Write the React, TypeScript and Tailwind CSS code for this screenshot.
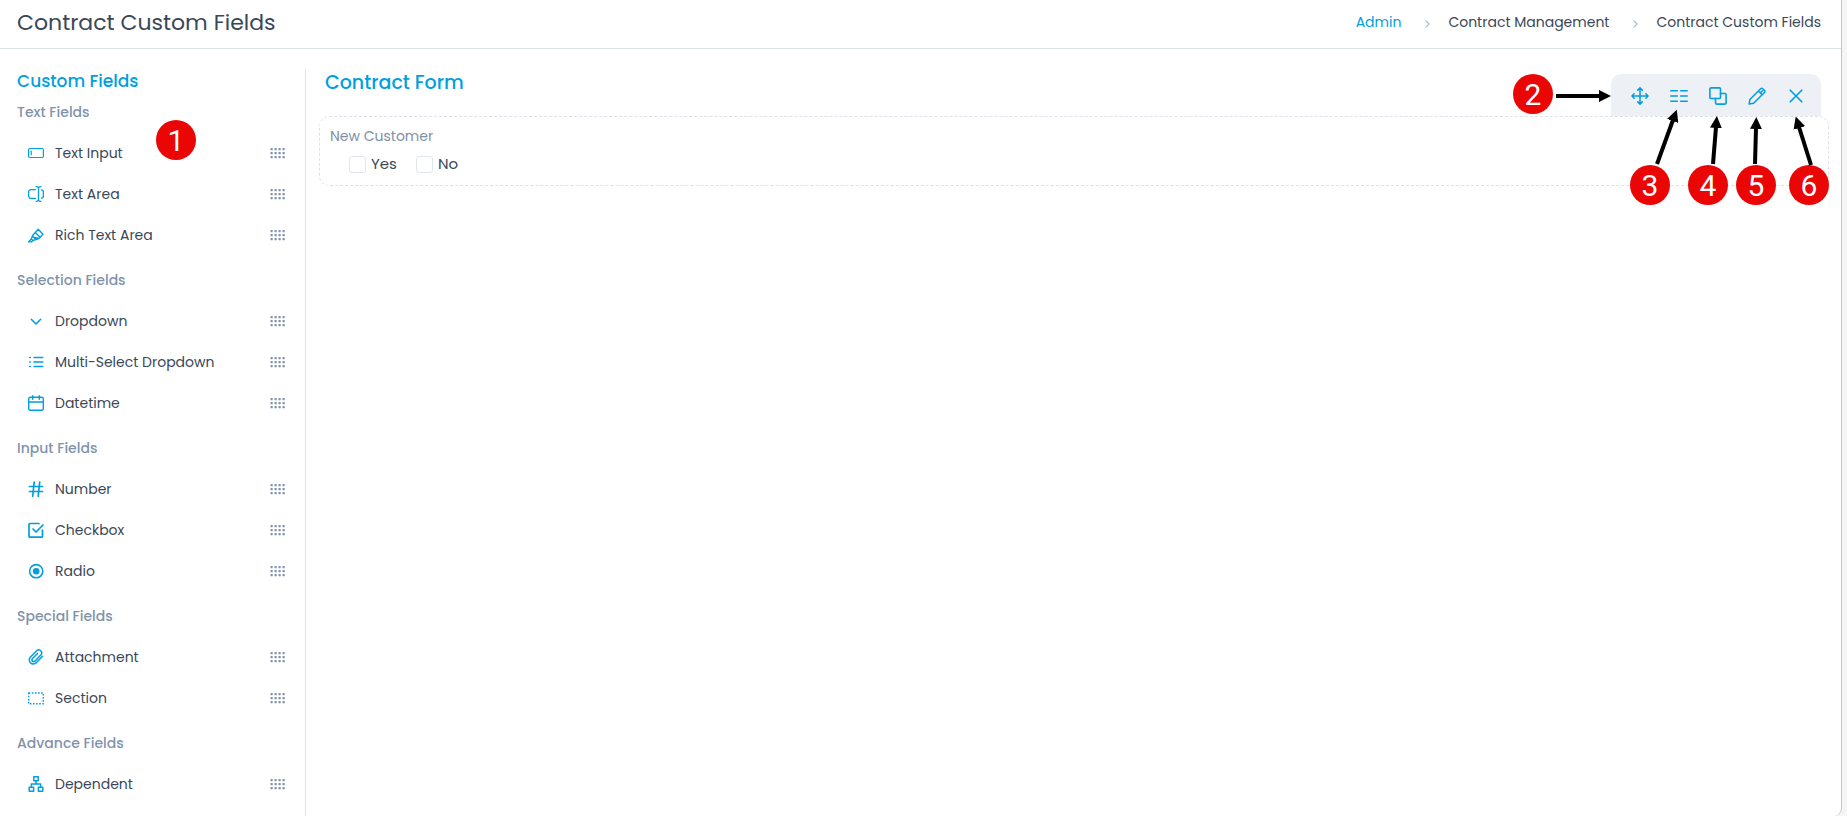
import { useState } from "react";
import type { ReactNode } from "react";

const Icon = ({
  children,
  className = "w-4 h-4",
  strokeWidth = 1.35,
}: {
  children: ReactNode;
  className?: string;
  strokeWidth?: number;
}) => (
  <svg
    className={`${className} shrink-0`}
    viewBox="0 0 16 16"
    fill="none"
    stroke="currentColor"
    strokeWidth={strokeWidth}
    strokeLinecap="round"
    strokeLinejoin="round"
    aria-hidden="true"
  >
    {children}
  </svg>
);

const icons: Record<string, ReactNode> = {
  input: (
    <Icon strokeWidth={1.2}>
      <rect x="0.6" y="3.5" width="14.8" height="9" rx="1.2" />
      <path d="M3.2 6.200v3.600" />
    </Icon>
  ),
  textarea: (
    <Icon strokeWidth={1.3}>
      <path d="M7.5 3.6H3A2.4 2.4 0 0 0 .6 6v4A2.4 2.4 0 0 0 3 12.4h4.500M13.500 3.800a2.300 2.300 0 0 1 1.900 2.300v3.800a2.300 2.300 0 0 1-1.900 2.300" />
      <path d="M8.200.6c1.400 0 2.300.5 2.300 1.400v12c0 .9-.9 1.400-2.300 1.400M12.800.6c-1.400 0-2.300.5-2.300 1.400v12c0 .9.9 1.400 2.300 1.400" />
    </Icon>
  ),
  richtext: (
    <Icon strokeWidth={1.35}>
      <path d="M10.200 2.300l4.800 5-4.200 4.200-5.500-1.300-.7-1.700zM7.300 5.400l5 5M4.600 8.500L3.300 12l1.500 1.500 6-2M5.300 10.200l2.700 2M3.300 12L.7 14.800h3l1.100-1.300" />
    </Icon>
  ),
  dropdown: (
    <Icon strokeWidth={1.6}>
      <path d="M3.300 6.300L8 11l4.700-4.700" />
    </Icon>
  ),
  multiselect: (
    <Icon strokeWidth={1.6}>
      <path d="M6 3.500h8.700M6 8h8.700M6 12.500h8.700M1.700 3.500h.6M1.700 8h.6M1.700 12.500h.6" />
    </Icon>
  ),
  datetime: (
    <Icon strokeWidth={1.4}>
      <rect x="0.700" y="2.300" width="14.600" height="13" rx="1.500" />
      <path d="M.7 7h14.600M4.700.7v3.500M11.300.7v3.500" />
    </Icon>
  ),
  number: (
    <Icon strokeWidth={1.7}>
      <path d="M1.500 5.500h13M1.500 10.500h13M6.200 1L4.700 15.200M11.700 1l-1.500 14.200" />
    </Icon>
  ),
  checkbox: (
    <Icon strokeWidth={1.7}>
      <path d="M11 1.500H2a1 1 0 0 0-1 1v11.700a1 1 0 0 0 1 1h11.500a1 1 0 0 0 1-1V8M5 7l3 3 7-7" />
    </Icon>
  ),
  radio: (
    <Icon strokeWidth={1.6}>
      <circle cx="8.200" cy="8.200" r="6.600" />
      <circle cx="8.200" cy="8.200" r="3.300" fill="currentColor" stroke="none" />
    </Icon>
  ),
  attachment: (
    <Icon strokeWidth={1.5}>
      <path d="M14.500 7.200l-6.300 6.500a4 4 0 0 1-5.900-5.500l6.100-6.300a2.950 2.950 0 0 1 4.400 4.100l-6 6.200a1.750 1.750 0 0 1-2.500-2.400l5.200-5.400" />
    </Icon>
  ),
  section: (
    <Icon strokeWidth={1.5}>
      <rect
        x="0.700"
        y="3"
        width="14.600"
        height="10.800"
        strokeDasharray="1.600 1.500"
        strokeLinecap="butt"
      />
    </Icon>
  ),
  dependent: (
    <Icon strokeWidth={1.5}>
      <path d="M5.800.8h4.400v4H5.800zM1.200 11.200h4.400v4H1.200zM10.400 11.200h4.400v4h-4.400zM8 4.800V8M3.400 11V8h9.200v3" />
    </Icon>
  ),
};

const fieldGroups = [
  {
    title: "Text Fields",
    fields: [
      { label: "Text Input", icon: "input" },
      { label: "Text Area", icon: "textarea" },
      { label: "Rich Text Area", icon: "richtext" },
    ],
  },
  {
    title: "Selection Fields",
    fields: [
      { label: "Dropdown", icon: "dropdown" },
      { label: "Multi-Select Dropdown", icon: "multiselect" },
      { label: "Datetime", icon: "datetime" },
    ],
  },
  {
    title: "Input Fields",
    fields: [
      { label: "Number", icon: "number" },
      { label: "Checkbox", icon: "checkbox" },
      { label: "Radio", icon: "radio" },
    ],
  },
  {
    title: "Special Fields",
    fields: [
      { label: "Attachment", icon: "attachment" },
      { label: "Section", icon: "section" },
    ],
  },
  {
    title: "Advance Fields",
    fields: [{ label: "Dependent", icon: "dependent" }],
  },
];

const toolbarActions = [
  {
    label: "Move",
    icon: (
      <Icon className="w-[18px] h-[18px]">
        <path d="M8 .8v14.400M.8 8h14.400M6 2.800l2-2 2 2M6 13.200l2 2 2-2M2.800 6l-2 2 2 2M13.200 6l2 2-2 2" />
      </Icon>
    ),
  },
  {
    label: "Columns",
    icon: (
      <Icon className="w-[18px] h-[18px]" strokeWidth={1.4}>
        <path d="M.7 3.300h5.800M.7 8h5.800M.7 12.700h5.800M9.500 3.300h5.800M9.500 8h5.800M9.500 12.700h5.800" />
      </Icon>
    ),
  },
  {
    label: "Duplicate",
    icon: (
      <Icon className="w-[18px] h-[18px]" strokeWidth={1.4}>
        <rect x="0.800" y="0.800" width="9.400" height="9.400" rx="0.900" />
        <path d="M10.200 5.800h4.100a.9.9 0 0 1 .9.9v7.600a.9.9 0 0 1-.9.9H6.700a.9.9 0 0 1-.9-.9v-4.100" />
      </Icon>
    ),
  },
  {
    label: "Edit",
    icon: (
      <Icon className="w-[18px] h-[18px]">
        <path d="M11.200 1.500a1.300 1.300 0 0 1 1.900 0l1.500 1.500a1.300 1.300 0 0 1 0 1.900L5 14.500l-4 .7.700-4.100zM9.200 3.600l3.300 3.300M11 5.200l1.800-1.800" />
      </Icon>
    ),
  },
  {
    label: "Remove",
    icon: (
      <Icon className="w-[18px] h-[18px]" strokeWidth={1.5}>
        <path d="M2.900 2.900l10.200 10.200M13.100 2.900L2.900 13.100" />
      </Icon>
    ),
  },
];

const DragHandle = () => (
  <svg
    className="w-4 h-3 ml-auto text-[#7f93ab]"
    viewBox="0 0 16 12"
    fill="currentColor"
    aria-hidden="true"
  >
    {[0, 1, 2].map((row) =>
      [0, 1, 2, 3].map((col) => (
        <rect
          key={`${row}-${col}`}
          x={col * 4 + 0.5}
          y={row * 4 + 1}
          width="2.200"
          height="2.200"
          rx="0.500"
        />
      ))
    )}
  </svg>
);

const steps = [
  { n: 2, cx: 24, cy: 24, from: [47, 26], to: [91, 26] },
  { n: 3, cx: 141, cy: 115, from: [148, 94], to: [164, 50] },
  { n: 4, cx: 199, cy: 115, from: [204, 94], to: [207, 57] },
  { n: 5, cx: 247, cy: 115, from: [246, 94], to: [247, 58] },
  { n: 6, cx: 300, cy: 115, from: [302, 95], to: [290, 57] },
];

// Numbered pointers over the field toolbar
const ToolbarSteps = () => (
  <svg
    className="absolute -top-[47px] -right-px w-[320px] h-[136px] pointer-events-none"
    viewBox="0 0 320 136"
  >
    <defs>
      <marker
        id="arrow-head"
        markerUnits="userSpaceOnUse"
        markerWidth="12"
        markerHeight="12"
        refX="1"
        refY="6"
        orient="auto"
      >
        <path d="M0 0l12 6-12 6z" />
      </marker>
    </defs>
    {steps.map((s) => (
      <g key={s.n}>
        <circle cx={s.cx} cy={s.cy} r="20" fill="#eb0606" />
        <text
          x={s.cx}
          y={s.cy + 11}
          textAnchor="middle"
          fill="#fff"
          className="text-[30px] font-['Roboto',sans-serif]"
        >
          {s.n}
        </text>
        <line
          x1={s.from[0]}
          y1={s.from[1]}
          x2={s.to[0]}
          y2={s.to[1]}
          stroke="#000"
          strokeWidth="4"
          markerEnd="url(#arrow-head)"
        />
      </g>
    ))}
  </svg>
);

const Separator = () => (
  <svg
    className="w-[5px] h-2 ml-6 mr-[18px] mt-1 text-[#a9b9cc]"
    viewBox="0 0 5 8"
    fill="none"
    stroke="currentColor"
    strokeWidth="1.200"
    aria-hidden="true"
  >
    <path d="M.7.7L4 4 .7 7.300" />
  </svg>
);

export default function App() {
  const [answers, setAnswers] = useState({ Yes: false, No: false });

  return (
    <div className="min-h-screen flex bg-[#f5f5f5] pr-[5px] font-['Poppins','Inter',sans-serif] text-[#3a4758]">
      <div className="flex-1 flex flex-col bg-white border-r border-[#c6c6c6] rounded-br-lg">
        <header className="h-[49px] flex items-center justify-between border-b border-[#dbe3ec] pl-[17px] pr-5 pb-[3px]">
          <h1 className="text-[22px] leading-8">Contract Custom Fields</h1>
          <nav
            aria-label="Breadcrumb"
            className="flex items-center pb-[2px] text-sm"
          >
            <a href="#admin" className="text-[#009fdf]">
              Admin
            </a>
            <Separator />
            <a href="#contract-management">Contract Management</a>
            <Separator />
            <span>Contract Custom Fields</span>
          </nav>
        </header>

        <div className="flex-1 flex pt-5">
          <aside className="w-[306px] shrink-0 border-r border-[#dfe3ea] pl-[17px] pr-[19px]">
            <h2 className="text-[17px] leading-6 font-medium text-[#009fdf]">
              Custom Fields
            </h2>
            <div className="relative space-y-[6px]">
              {fieldGroups.map((group) => (
                <section key={group.title}>
                  <h3 className="h-[39px] flex items-center pb-[2px] text-sm font-medium text-[#7f93ab]">
                    {group.title}
                  </h3>
                  <ul>
                    {group.fields.map((field) => (
                      <li key={field.label}>
                        <button
                          type="button"
                          className="w-full h-[41px] flex items-center gap-[11px] pl-[11px] text-sm cursor-grab"
                        >
                          <span className="text-[#009fdf]">
                            {icons[field.icon]}
                          </span>
                          {field.label}
                          <DragHandle />
                        </button>
                      </li>
                    ))}
                  </ul>
                </section>
              ))}
              <span className="absolute left-[139px] top-[27px] w-10 h-10 rounded-full bg-[#eb0606] text-white text-[30px] flex items-center justify-center font-['Roboto',sans-serif]">
                1
              </span>
            </div>
          </aside>

          <main className="flex-1 pl-[13px] pr-3">
            <div className="h-[47px] flex items-end justify-between pl-[6px] pr-2">
              <h2 className="self-start text-[19px] leading-7 font-medium text-[#009fdf]">
                Contract Form
              </h2>
              <div className="h-[42px] flex items-center gap-[21px] rounded-t-[10px] bg-[#edf0f5] pl-5 pr-4 pt-[2px] text-[#009fdf]">
                {toolbarActions.map((action) => (
                  <button
                    key={action.label}
                    type="button"
                    aria-label={action.label}
                  >
                    {action.icon}
                  </button>
                ))}
              </div>
            </div>

            <fieldset className="relative h-[70px] rounded-[10px] border border-dashed border-[#dce2ec] px-[10px] pt-[9px]">
              <p className="text-sm text-[#7f8fa4]">New Customer</p>
              <div className="flex gap-[19px] pl-[19px] pt-[6px]">
                {(["Yes", "No"] as const).map((option) => (
                  <label
                    key={option}
                    className="flex items-center gap-[5px] text-[15px] leading-6"
                  >
                    <input
                      type="checkbox"
                      checked={answers[option]}
                      onChange={(e) =>
                        setAnswers({ ...answers, [option]: e.target.checked })
                      }
                      className="appearance-none w-[17px] h-[17px] rounded-[3px] border border-[#e1e5ee] checked:bg-[#009fdf]"
                    />
                    {option}
                  </label>
                ))}
              </div>
              <ToolbarSteps />
            </fieldset>
          </main>
        </div>
      </div>
    </div>
  );
}
